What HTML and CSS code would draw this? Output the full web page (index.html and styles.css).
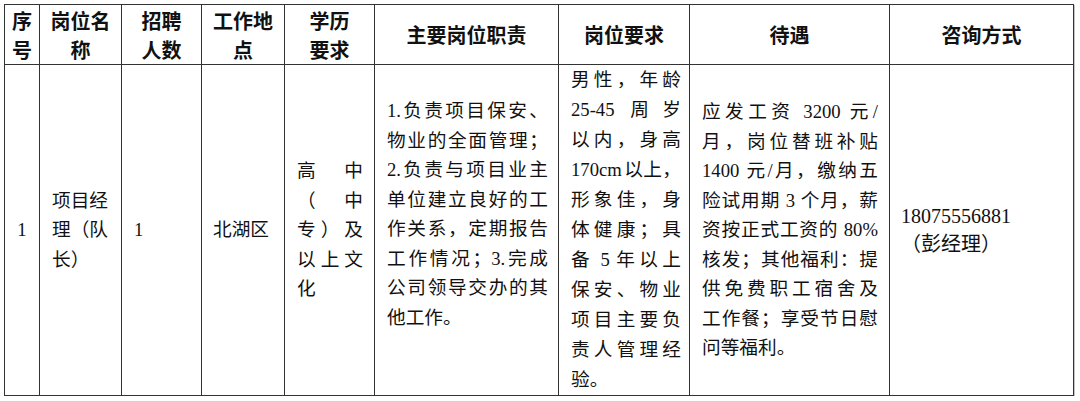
FILE: index.html
```html
<!DOCTYPE html>
<html lang="zh-CN">
<head>
<meta charset="utf-8">
<title>招聘岗位</title>
<link rel="stylesheet" href="styles.css">
</head>
<body>
<table class="jobs">
  <colgroup>
    <col class="c-no"><col class="c-name"><col class="c-count"><col class="c-place"><col class="c-edu"><col class="c-duty"><col class="c-req"><col class="c-pay"><col class="c-contact">
  </colgroup>
  <thead>
    <tr class="head">
      <th>序<br>号</th>
      <th>岗位名<br>称</th>
      <th>招聘<br>人数</th>
      <th>工作地<br>点</th>
      <th>学历<br>要求</th>
      <th>主要岗位职责</th>
      <th>岗位要求</th>
      <th>待遇</th>
      <th>咨询方式</th>
    </tr>
  </thead>
  <tbody>
    <tr class="row">
      <td class="no">1</td>
      <td class="name">项目经<br>理（队<br>长）</td>
      <td class="count">1</td>
      <td class="place">北湖区</td>
      <td class="edu">
        <span class="ln">高中</span>
        <span class="ln">（中</span>
        <span class="ln">专）及</span>
        <span class="ln">以上文</span>
        <span class="ln end">化</span>
      </td>
      <td class="duty">
        <span class="ln">1.负责项目保安、</span>
        <span class="ln">物业的全面管理；</span>
        <span class="ln">2.负责与项目业主</span>
        <span class="ln">单位建立良好的工</span>
        <span class="ln">作关系，定期报告</span>
        <span class="ln">工作情况；3.完成</span>
        <span class="ln">公司领导交办的其</span>
        <span class="ln end">他工作。</span>
      </td>
      <td class="req">
        <span class="ln">男性，年龄</span>
        <span class="ln">25-45 周岁</span>
        <span class="ln">以内，身高</span>
        <span class="ln">170cm 以上，</span>
        <span class="ln">形象佳，身</span>
        <span class="ln">体健康；具</span>
        <span class="ln">备 5 年以上</span>
        <span class="ln">保安、物业</span>
        <span class="ln">项目主要负</span>
        <span class="ln">责人管理经</span>
        <span class="ln end">验。</span>
      </td>
      <td class="pay">
        <span class="ln">应发工资 3200 元/</span>
        <span class="ln">月，岗位替班补贴</span>
        <span class="ln">1400 元/月，缴纳五</span>
        <span class="ln">险试用期 3 个月，薪</span>
        <span class="ln">资按正式工资的 80%</span>
        <span class="ln">核发；其他福利：提</span>
        <span class="ln">供免费职工宿舍及</span>
        <span class="ln">工作餐；享受节日慰</span>
        <span class="ln end">问等福利。</span>
      </td>
      <td class="contact">18075556881<br>（彭经理）</td>
    </tr>
  </tbody>
</table>
</body>
</html>
```

FILE: styles.css
```css
html, body {
  margin: 0;
  padding: 0;
  background: #fff;
}

body {
  font-family: "Liberation Serif", "Noto Sans CJK SC", serif;
  color: #111;
}

.jobs {
  border-collapse: separate;
  border-spacing: 0;
  table-layout: fixed;
  width: 1070px;
  margin: 4px 0 0 4px;
  border-left: 1px solid #333;
  border-top: 1px solid #333;
  box-shadow: 1px 1px 0 #c4c4c4;
}

.c-no { width: 35px; }
.c-name { width: 82px; }
.c-count { width: 80px; }
.c-place { width: 83px; }
.c-edu { width: 90px; }
.c-duty { width: 184px; }
.c-req { width: 131px; }
.c-pay { width: 200px; }
.c-contact { width: 184px; }

.jobs th,
.jobs td {
  border-right: 1px solid #333;
  border-bottom: 1px solid #333;
  padding: 0;
  vertical-align: middle;
}

.head {
  height: 60px;
}

.head th {
  font-family: "Noto Sans CJK SC", sans-serif;
  font-weight: 700;
  font-size: 20px;
  line-height: 29px;
  text-align: center;
  color: #111;
}

.row {
  height: 331px;
}

.row td {
  font-size: 18.67px;
  line-height: 29.5px;
  text-align: left;
  text-align-last: auto;
}

.ln {
  display: block;
  text-align: justify;
  text-align-last: justify;
}

.ln.end {
  text-align: left;
  text-align-last: left;
}

.no {
  text-align: center !important;
}

.name {
  padding-left: 12px !important;
}

.count {
  padding-left: 12px !important;
}

.place {
  padding-left: 11px !important;
}

.edu {
  padding: 0 11px 0 12px !important;
}

.duty {
  padding: 0 10px 32px 12px !important;
}

.req {
  padding: 0 8px 0 12px !important;
  word-spacing: -2.5px;
}

.row .req {
  line-height: 30px;
}

.pay {
  padding: 0 11px 0 12px !important;
}

.contact {
  padding-left: 11px !important;
}

.row .contact {
  font-size: 20px;
  line-height: 28.5px;
}
```
